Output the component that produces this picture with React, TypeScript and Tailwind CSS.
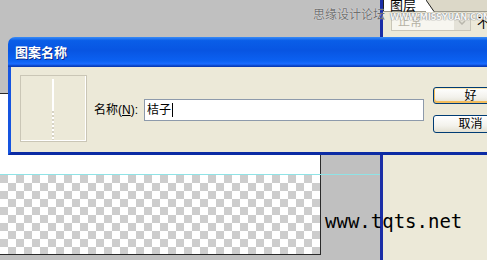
export default function App() {
  return (
    <div className="relative h-[260px] w-[487px] overflow-hidden bg-[#c0c0c0] font-['Liberation_Sans','Noto_Sans_CJK_SC',sans-serif] text-[12px] leading-none">
      <div className="flex h-full">
        {/* workspace with document */}
        <div className="flex w-[380px] shrink-0 flex-col">
          <div className="h-[93px] shrink-0" />
          <div className="flex h-[81px] shrink-0">
            <div className="w-[321px] border-t border-r border-[#2a2a2a] bg-white" />
            <div className="flex-1" />
          </div>
          <div className="h-px shrink-0 bg-[#8fe3e6]" />
          <div className="flex h-[80px] shrink-0">
            <div className="w-[321px] border-r border-b border-[#2a2a2a] [background-image:conic-gradient(#fff_25%,#cdcdcd_0_50%,#fff_0_75%,#cdcdcd_0)] [background-size:16px_16px]" />
            <div className="flex-1" />
          </div>
        </div>

        {/* panel border */}
        <div className="w-[3px] shrink-0 bg-[#1b2ea6]" />

        {/* layers panel */}
        <div className="flex flex-1 flex-col bg-[#ece9d8]">
          <div className="flex h-[12px] shrink-0 border-b border-[#9d9a8c] bg-[#dcd8c8]">
            <div className="relative flex w-[44px] items-end bg-white pl-[7px]">
              <span className="-mb-[1px] whitespace-nowrap text-[13px] text-black">图层</span>
              <svg className="absolute -right-[8px] top-0" width="9" height="12" viewBox="0 0 9 12">
                <polygon points="0,0 8,12 0,12" fill="#fff" />
                <line x1="0" y1="0" x2="8" y2="11.5" stroke="#222" strokeWidth="1" />
              </svg>
              <div className="absolute left-0 top-0 h-full w-px bg-[#222]" />
            </div>
          </div>
          <div className="mt-[1px] flex items-center pl-[8px]">
            <div className="flex h-[18px] w-[80px] shrink-0 items-center border border-[#c9c6b8] bg-[#f7f6f0]">
              <span className="flex-1 whitespace-nowrap pl-[6px] text-[12px] text-[#b5b2a5]">正常</span>
              <div className="flex h-full w-[16px] items-center justify-center bg-[#e4e2d8]">
                <svg width="8" height="5" viewBox="0 0 8 5">
                  <path d="M1 1 L4 4 L7 1" stroke="#b9b7ad" strokeWidth="1.5" fill="none" />
                </svg>
              </div>
            </div>
            <span className="ml-[6px] whitespace-nowrap text-[13px] text-black">不</span>
          </div>
        </div>
      </div>

      {/* watermark */}
      <div className="absolute left-[313px] top-[9px] flex items-center whitespace-nowrap">
        <span className="text-[12px] text-[#6f6f6f] [text-shadow:0_0_1px_#fff]">思缘设计论坛</span>
        <span className="ml-[5px] mt-[4px] font-['DejaVu_Sans',sans-serif] text-[8.5px] font-bold tracking-[-0.3px] text-[#f4f4f4] [text-shadow:0_0_1px_#7a7a7a,0_0_1px_#7a7a7a]">
          WWW.MISSYUAN.COM
        </span>
      </div>

      {/* dialog */}
      <div className="absolute left-[8px] top-[37px] w-[500px]">
        <div className="flex h-[30px] items-center rounded-tl-[7px] bg-[linear-gradient(to_bottom,#3a8cf6_0%,#0a5ee8_12%,#0855e2_45%,#0b61f2_80%,#1a6cff_90%,#0a44c6_96%,#0737b0_100%)] pl-[7px]">
          <span className="text-[13px] font-bold text-white [text-shadow:1px_1px_0_#0a2a8a]">图案名称</span>
        </div>
        <div className="flex h-[88px] items-start border-b-[3px] border-l-[3px] border-b-[#0b2ba4] border-l-[#1554e0] bg-[#ece9d8]">
          <div className="ml-[9px] mt-[8px] flex h-[67px] w-[68px] justify-center border border-[#cac6b6] shadow-[inset_-1px_-1px_0_#fff]">
            <div className="mt-[3px] flex w-[2px] flex-col">
              <div className="h-[30px] bg-white" />
              <div className="h-[31px] bg-[repeating-linear-gradient(to_bottom,#fff_0_2px,#d6d2c4_2px_4px)]" />
            </div>
          </div>
          <div className="ml-[7px] mt-[32px] flex items-center">
            <span className="whitespace-nowrap text-[12px] text-black">
              名称(<span className="underline">N</span>):
            </span>
            <div className="ml-[6px] flex h-[22px] w-[280px] items-center border border-[#8d9aab] bg-white pl-[2px]">
              <span className="text-[12px] text-black">桔子</span>
              <div className="ml-px h-[14px] w-px bg-black" />
            </div>
          </div>
          <div className="ml-[9px] mt-[20px] flex flex-col gap-[11px]">
            <div className="flex h-[17px] w-[75px] items-center justify-center rounded-[3px] border border-[#003c74] bg-[linear-gradient(to_bottom,#fff,#f3f2ec_60%,#e3e0d2)] shadow-[inset_1px_-2px_0_#f3bd5c,inset_-1px_1px_0_#fde7b0]">
              <span className="text-[12px] text-black">好</span>
            </div>
            <div className="flex h-[18px] w-[75px] items-center justify-center rounded-[3px] border border-[#003c74] bg-[linear-gradient(to_bottom,#fff,#f3f2ec_60%,#e3e0d2)]">
              <span className="text-[12px] text-black">取消</span>
            </div>
          </div>
        </div>
      </div>

      {/* site text */}
      <div className="absolute left-[325px] top-[212px] whitespace-nowrap font-['DejaVu_Sans_Mono',monospace] text-[19px] text-black">
        www.tqts.net
      </div>
    </div>
  );
}
